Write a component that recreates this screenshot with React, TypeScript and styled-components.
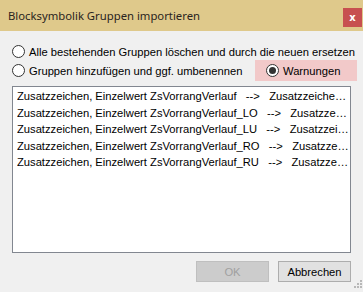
import React from "react";
import styled, { createGlobalStyle } from "styled-components";

const Global = createGlobalStyle`
  html, body { margin: 0; padding: 0; background: #f0f0f0; }
  body { width: 363px; height: 292px; overflow: hidden; }
`;

const Window = styled.div`
  position: relative;
  width: 363px;
  height: 292px;
  display: flex;
  flex-direction: column;
  background: #f0f0f0;
  font-family: "Liberation Sans", Arial, sans-serif;
  font-size: 11.2px;
  color: #000;
`;

const TitleBar = styled.div`
  height: 31px;
  flex: none;
  display: flex;
  align-items: flex-start;
  background: #dfc98b;
`;

const Title = styled.div`
  flex: 1;
  padding-left: 8px;
  line-height: 31px;
  font-family: "Noto Sans", "Open Sans", sans-serif;
  font-size: 11.3px;
  color: #2a2420;
`;

const CloseButton = styled.div`
  width: 19px;
  height: 19px;
  margin-top: 8px;
  margin-right: 1px;
  background: #c75050;
  color: #fff;
  display: flex;
  align-items: center;
  justify-content: center;
  font-family: "DejaVu Sans", sans-serif;
  font-weight: bold;
  font-size: 10px;
  line-height: 1;
`;

const Content = styled.div`
  flex: 1;
  display: flex;
  flex-direction: column;
  padding: 12px 12px 0 12px;
`;

const RadioRow = styled.div<{ $h: number }>`
  height: ${(p) => p.$h}px;
  display: flex;
  align-items: center;
  justify-content: space-between;
`;

const RadioLabel = styled.label`
  display: flex;
  align-items: center;
  gap: 4px;
  white-space: nowrap;
`;

const Circle = styled.span<{ $checked?: boolean }>`
  width: 13px;
  height: 13px;
  box-sizing: border-box;
  border: 1px solid #333;
  border-radius: 50%;
  background: #fff;
  display: flex;
  align-items: center;
  justify-content: center;
  flex: none;
  &::after {
    content: "";
    display: ${(p) => (p.$checked ? "block" : "none")};
    width: 7px;
    height: 7px;
    border-radius: 50%;
    background: #333;
  }
`;

const WarnBox = styled.div`
  width: 102px;
  height: 21px;
  box-sizing: border-box;
  margin-right: -6px;
  padding-left: 11px;
  display: flex;
  align-items: center;
  background: #f2c9c9;
`;

const ListBox = styled.div`
  margin-top: 5px;
  height: 167px;
  box-sizing: border-box;
  border: 1px solid #828790;
  background: #fff;
  padding: 1px 0 0 4px;
  overflow: hidden;
`;

const ListItem = styled.div`
  height: 16.5px;
  line-height: 16.5px;
  width: 332px;
  white-space: pre;
  overflow: hidden;
  text-overflow: ellipsis;
`;

const ButtonRow = styled.div`
  margin-top: 8px;
  display: flex;
  justify-content: flex-end;
  gap: 9px;
`;

const Button = styled.div<{ $disabled?: boolean }>`
  width: 73px;
  height: 21px;
  box-sizing: border-box;
  display: flex;
  align-items: center;
  justify-content: center;
  border: 1px solid ${(p) => (p.$disabled ? "#bfbfbf" : "#adadad")};
  background: ${(p) => (p.$disabled ? "#cccccc" : "#e1e1e1")};
  color: ${(p) => (p.$disabled ? "#a0a0a0" : "#000")};
`;

const Grip = styled.svg`
  position: absolute;
  right: 1px;
  bottom: 2px;
`;

const items = [
  "Zusatzzeichen, Einzelwert ZsVorrangVerlauf   -->   Zusatzzeichen, Einzelwert ZsVorrangVerlauf",
  "Zusatzzeichen, Einzelwert ZsVorrangVerlauf_LO   -->   Zusatzzeichen, Einzelwert ZsVorrangVerlauf_LO",
  "Zusatzzeichen, Einzelwert ZsVorrangVerlauf_LU   -->   Zusatzzeichen, Einzelwert ZsVorrangVerlauf_LU",
  "Zusatzzeichen, Einzelwert ZsVorrangVerlauf_RO   -->   Zusatzzeichen, Einzelwert ZsVorrangVerlauf_RO",
  "Zusatzzeichen, Einzelwert ZsVorrangVerlauf_RU   -->   Zusatzzeichen, Einzelwert ZsVorrangVerlauf_RU",
];

export default function App() {
  return (
    <>
      <Global />
      <Window>
        <TitleBar>
          <Title>Blocksymbolik Gruppen importieren</Title>
          <CloseButton>x</CloseButton>
        </TitleBar>
        <Content>
          <RadioRow $h={17}>
            <RadioLabel>
              <Circle />
              Alle bestehenden Gruppen löschen und durch die neuen ersetzen
            </RadioLabel>
          </RadioRow>
          <RadioRow $h={21}>
            <RadioLabel>
              <Circle />
              Gruppen hinzufügen und ggf. umbenennen
            </RadioLabel>
            <WarnBox>
              <RadioLabel>
                <Circle $checked />
                Warnungen
              </RadioLabel>
            </WarnBox>
          </RadioRow>
          <ListBox>
            {items.map((t, i) => (
              <ListItem key={i}>{t}</ListItem>
            ))}
          </ListBox>
          <ButtonRow>
            <Button $disabled>OK</Button>
            <Button>Abbrechen</Button>
          </ButtonRow>
        </Content>
        <Grip width="10" height="10" viewBox="0 0 10 10">
          {[
            [8, 0],
            [8, 3],
            [5, 3],
            [8, 6],
            [5, 6],
            [2, 6],
          ].map(([x, y], i) => (
            <rect key={i} x={x} y={y} width="2" height="2" fill="#b8b8b8" />
          ))}
        </Grip>
      </Window>
    </>
  );
}
